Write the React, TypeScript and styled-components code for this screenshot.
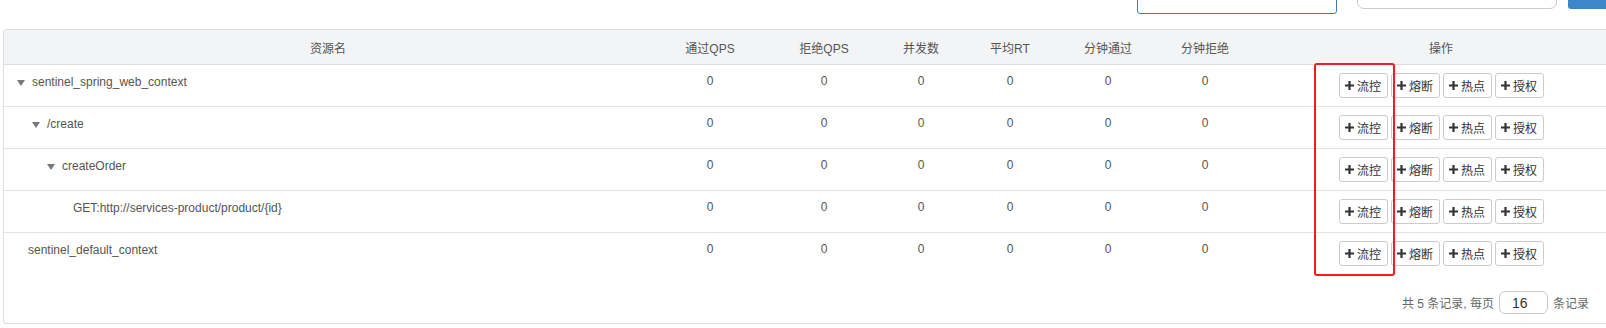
import styled, { createGlobalStyle } from "styled-components";

const GlobalStyle = createGlobalStyle`
  html, body {
    margin: 0;
    padding: 0;
    background: #fff;
    overflow: hidden;
  }
  body {
    font-family: "Liberation Sans", Arial, "Noto Sans CJK SC", sans-serif;
    font-size: 12px;
    color: #555;
  }
`;

const Page = styled.div`
  width: 1606px;
  height: 328px;
  overflow: hidden;
`;

const Toolbar = styled.div`
  height: 29px;
  display: flex;
  align-items: flex-end;
  overflow: hidden;
  padding-left: 1137px;
`;

const SearchBox = styled.div`
  flex-shrink: 0;
  width: 200px;
  height: 34px;
  box-sizing: border-box;
  border: 1px solid ${(props: { focused?: boolean }) => (props.focused ? "#3f7cbc" : "#ccc")};
  border-radius: ${(props: { focused?: boolean }) => (props.focused ? "3px" : "7px")};
  margin-bottom: ${(props: { focused?: boolean }) => (props.focused ? "15px" : "20px")};
  margin-right: 20px;
  background: #fff;
`;

const SearchButton = styled.div`
  flex-shrink: 0;
  width: 60px;
  height: 34px;
  margin-left: -9px;
  margin-bottom: 20px;
  border-radius: 3px;
  background: #3d86c8;
`;

const Card = styled.div`
  position: relative;
  margin-left: 3px;
  width: 1628px;
  height: 295px;
  box-sizing: border-box;
  border: 1px solid #ddd;
  border-radius: 3px;
`;

const COLUMNS = "648px 116px 112px 82px 96px 100px 94px 1fr";

const HeadRow = styled.div`
  display: grid;
  grid-template-columns: ${COLUMNS};
  height: 34px;
  background: #f3f4f6;
  border-bottom: 1px solid #ddd;
`;

const HeadCell = styled.div`
  display: flex;
  align-items: center;
  justify-content: center;
  color: #555;
  font-size: 12px;
`;

const Row = styled.div`
  display: grid;
  grid-template-columns: ${COLUMNS};
  height: 41px;
  border-bottom: 1px solid ${(props: { last?: boolean }) => (props.last ? "transparent" : "#e3e3e3")};
`;

const Cell = styled.div`
  padding-top: 8px;
  line-height: 17px;
  text-align: center;
  color: #555;
  white-space: nowrap;
`;

const NameCell = styled.div`
  display: flex;
  align-items: center;
  height: 17px;
  margin-top: 8px;
  padding-left: ${(props: { indent: number }) => props.indent}px;
  color: #555;
  white-space: nowrap;
`;

const Toggle = styled.span`
  display: inline-block;
  width: 0;
  height: 0;
  margin-top: 3px;
  margin-right: 7px;
  border-left: 4px solid transparent;
  border-right: 4px solid transparent;
  border-top: 6px solid #777;
`;

const Actions = styled.div`
  display: flex;
  align-items: center;
  justify-content: center;
  gap: 3px;
`;

const ActionButton = styled.div`
  width: 49px;
  height: 25px;
  box-sizing: border-box;
  display: flex;
  align-items: center;
  justify-content: center;
  gap: 3px;
  border: 1px solid #ccc;
  border-radius: 3px;
  background: #fff;
  color: #333;
  font-size: 12px;
`;

const PlusIcon = styled.svg`
  width: 9px;
  height: 9px;
`;

const Footer = styled.div`
  display: flex;
  align-items: center;
  justify-content: flex-end;
  gap: 5px;
  padding: 16px 41px 0 0;
  color: #666;
  font-size: 12px;
`;

const PageSize = styled.div`
  width: 49px;
  height: 23px;
  box-sizing: border-box;
  padding-left: 12px;
  display: flex;
  align-items: center;
  border: 1px solid #ccc;
  border-radius: 6px;
  color: #333;
  font-size: 14px;
`;

const Highlight = styled.div`
  position: absolute;
  left: 1310px;
  top: 33px;
  width: 81px;
  height: 213px;
  box-sizing: border-box;
  border: 2px solid #f41d1d;
  border-radius: 3px;
  pointer-events: none;
`;

const headers = ["资源名", "通过QPS", "拒绝QPS", "并发数", "平均RT", "分钟通过", "分钟拒绝", "操作"];

const resources = [
  { name: "sentinel_spring_web_context", indent: 13, toggle: true },
  { name: "/create", indent: 28, toggle: true },
  { name: "createOrder", indent: 43, toggle: true },
  { name: "GET:http://services-product/product/{id}", indent: 69, toggle: false },
  { name: "sentinel_default_context", indent: 24, toggle: false },
];

const actions = ["流控", "熔断", "热点", "授权"];

const Plus = () => (
  <PlusIcon viewBox="0 0 9 9">
    <path d="M3.4 0h2.2v3.4H9v2.2H5.6V9H3.4V5.6H0V3.4h3.4z" fill="#333" />
  </PlusIcon>
);

const App = () => {
  return (
    <Page>
      <GlobalStyle />
      <Toolbar>
        <SearchBox focused />
        <SearchBox />
        <SearchButton />
      </Toolbar>
      <Card>
        <HeadRow>
          {headers.map((h) => (
            <HeadCell key={h}>{h}</HeadCell>
          ))}
        </HeadRow>
        {resources.map((r, index) => (
          <Row key={r.name} last={index === resources.length - 1}>
            <NameCell indent={r.indent}>
              {r.toggle && <Toggle />}
              {r.name}
            </NameCell>
            {[0, 1, 2, 3, 4, 5].map((i) => (
              <Cell key={i}>0</Cell>
            ))}
            <Actions>
              {actions.map((a) => (
                <ActionButton key={a}>
                  <Plus />
                  {a}
                </ActionButton>
              ))}
            </Actions>
          </Row>
        ))}
        <Footer>
          <span>共 5 条记录, 每页</span>
          <PageSize>16</PageSize>
          <span>条记录</span>
        </Footer>
        <Highlight />
      </Card>
    </Page>
  );
};

export default App;
